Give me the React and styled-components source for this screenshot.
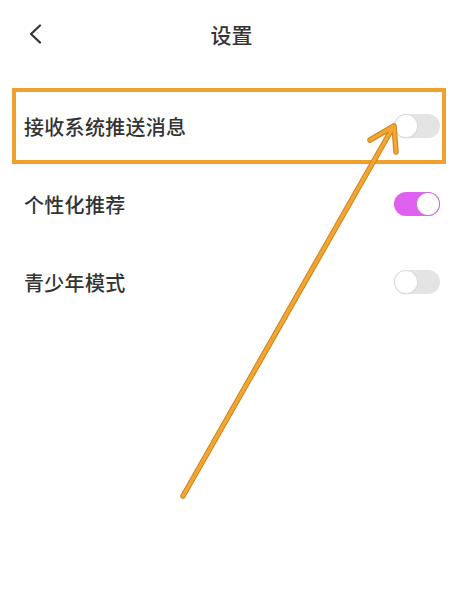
import React from "react"
import styled, { createGlobalStyle } from "styled-components"

const GlobalStyle = createGlobalStyle`
  html, body {
    margin: 0;
    padding: 0;
    background: #fff;
  }
  body {
    font-family: "Noto Sans CJK SC", "Noto Sans", sans-serif;
    color: #333;
  }
`

const Page = styled.div`
  position: relative;
  width: 451px;
  height: 590px;
  background: #fff;
  overflow: hidden;
`

const Header = styled.div`
  display: flex;
  align-items: center;
  height: 67px;
  padding: 0 28px;
  .back {
    width: 14px;
    height: 20px;
    display: block;
  }
  .title {
    flex: 1;
    text-align: center;
    font-size: 21px;
    font-weight: 500;
    color: #333;
    padding-left: 12px;
  }
  .spacer {
    width: 14px;
  }
`

const List = styled.div`
  display: flex;
  flex-direction: column;
  gap: 2px;
  margin-top: 21px;
  padding: 0 5px 0 12px;
`

const Row = styled.div`
  display: flex;
  align-items: center;
  justify-content: space-between;
  height: 76px;
  box-sizing: border-box;
  border: 4px solid ${(p) => (p.$highlight ? "#F0A02E" : "transparent")};
  padding: 0 2px 0 8px;
  font-size: 20px;
  font-weight: 500;
  color: #333;
  letter-spacing: 0.3px;
`

const Toggle = styled.div`
  display: flex;
  align-items: center;
  justify-content: ${(p) => (p.$on ? "flex-end" : "flex-start")};
  width: 46px;
  height: 24px;
  box-sizing: border-box;
  padding: 1px;
  border-radius: 12px;
  background: ${(p) => (p.$on ? "#DF5FF1" : "#E4E4E4")};
  .knob {
    width: 22px;
    height: 22px;
    border-radius: 50%;
    background: #fff;
    box-shadow: ${(p) =>
      p.$on ? "0 0 0 1px #C77ADB" : "0 0 0 1px #DCDCDC, 0 1px 2px rgba(0,0,0,0.12)"};
  }
`

const Annotation = styled.svg`
  position: absolute;
  left: 0;
  top: 0;
  pointer-events: none;
`

const items = [
  { label: "接收系统推送消息", on: false, highlight: true },
  { label: "个性化推荐", on: true },
  { label: "青少年模式", on: false },
]

export default function App() {
  return (
    <Page>
      <GlobalStyle />
      <Header>
        <svg className="back" viewBox="0 0 14 20">
          <path d="M12 1.5 L3 10 L12 18.5" fill="none" stroke="#333" strokeWidth="2.2" strokeLinecap="round" strokeLinejoin="round" />
        </svg>
        <div className="title">设置</div>
        <div className="spacer" />
      </Header>
      <List>
        {items.map((it) => (
          <Row key={it.label} $highlight={it.highlight}>
            <span>{it.label}</span>
            <Toggle $on={it.on}>
              <div className="knob" />
            </Toggle>
          </Row>
        ))}
      </List>
      <Annotation width="451" height="590" viewBox="0 0 451 590">
        <g fill="none" strokeLinecap="round" strokeLinejoin="round">
          <path d="M183 496 L392 129 M370 140 L394 126 L396 152" stroke="#C9861E" strokeWidth="5.5" />
          <path d="M183 496 L392 129 M370 140 L394 126 L396 152" stroke="#F4A431" strokeWidth="3.5" />
        </g>
      </Annotation>
    </Page>
  )
}
